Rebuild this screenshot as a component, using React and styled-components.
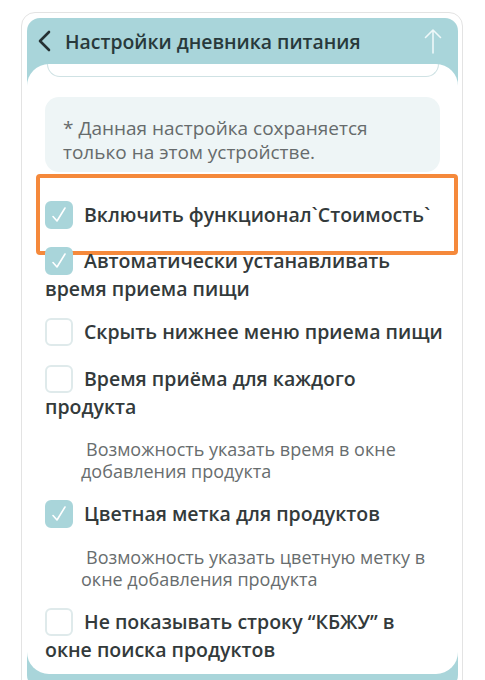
import React from 'react'
import styled, { createGlobalStyle } from 'styled-components'

const Global = createGlobalStyle`
  html, body {
    margin: 0;
    background: #ffffff;
    font-family: "Open Sans", "Noto Sans", sans-serif;
  }
`

const Page = styled.div`
  padding: 12px 22px 0 21px;
  height: 680px;
  overflow: hidden;
  box-sizing: border-box;
`

const Frame = styled.div`
  border: 1.5px solid #e3e3e3;
  border-radius: 14px;
  padding: 5px 4px 0 5px;
  height: 720px;
`

const Shell = styled.div`
  background: #a9d5da;
  border-radius: 13px;
  padding-bottom: 14px;
`

const Header = styled.div`
  height: 46px;
  display: flex;
  align-items: center;
  padding: 0 16px 0 10px;
  gap: 12px;
`

const Title = styled.div`
  flex: 1;
  font-size: 19.4px;
  font-weight: 600;
  color: #28393b;
`

const Panel = styled.div`
  background: #ffffff;
  border-radius: 22px;
  padding: 0 10px 11px 18px;
`

const PrevCard = styled.div`
  margin: 0 9px 0 2px;
  height: 12px;
  border: 1.5px solid #cfe2e4;
  border-top: none;
  border-radius: 0 0 14px 14px;
`

const Note = styled.div`
  margin: 20px 8px 0 0;
  background: #eef5f6;
  border-radius: 14px;
  padding: 19px 18px 8px;
  font-size: 19px;
  line-height: 24px;
  color: #666b6c;
`

const List = styled.div`
  margin-top: 29px;
  display: flex;
  flex-direction: column;
`

const Row = styled.div`
  position: relative;
  font-size: 19.5px;
  font-weight: 600;
  line-height: 27px;
  color: #333a3b;
  margin-top: ${p => p.$gap}px;
`

const Box = styled.span`
  display: inline-block;
  box-sizing: border-box;
  width: 28px;
  height: 28px;
  border-radius: 6px;
  margin-right: 11px;
  vertical-align: -7px;
  background: ${p => (p.$on ? '#a9d5da' : '#ffffff')};
  border: 2px solid ${p => (p.$on ? '#a9d5da' : '#dfeaeb')};
  position: relative;
`

const Highlight = styled.div`
  position: absolute;
  left: -9px;
  right: -10px;
  top: -27px;
  bottom: -26px;
  border: 4.5px solid #f5893b;
  border-radius: 4px;
  pointer-events: none;
`

const Sub = styled.div`
  margin: 18px 8px 0 36px;
  font-size: 18px;
  line-height: 22px;
  color: #686d6e;
  text-indent: 5px;
`

const Check = () => (
  <svg width='24' height='24' viewBox='0 0 24 24' style={{ position: 'absolute', left: 0, top: 0 }}>
    <path d='M6 13.5 L10 18 L18 5' fill='none' stroke='#ffffff' strokeWidth='1.6' strokeLinecap='round' strokeLinejoin='round' />
  </svg>
)

const CheckBox = ({ on }) => <Box $on={on}>{on && <Check />}</Box>

const Back = () => (
  <svg width='16' height='24' viewBox='0 0 16 24'>
    <path d='M12 3 L3 12 L12 21' fill='none' stroke='#253133' strokeWidth='2.6' strokeLinecap='round' strokeLinejoin='round' />
  </svg>
)

const Up = () => (
  <svg width='18' height='28' viewBox='0 0 18 28'>
    <path d='M9 26 V3 M1.5 10.5 L9 3 L16.5 10.5' fill='none' stroke='#eef8f9' strokeWidth='1.6' strokeLinecap='round' strokeLinejoin='round' />
  </svg>
)

export default function App() {
  return (
    <Page>
      <Global />
      <Frame>
        <Shell>
          <Header>
            <Back />
            <Title>Настройки дневника питания</Title>
            <Up />
          </Header>
          <Panel>
            <PrevCard />
            <Note>
              * Данная настройка сохраняется
              <br />
              только на этом устройстве.
            </Note>
            <List>
              <Row $gap={0}>
                <CheckBox on />
                Включить функционал`Стоимость`
                <Highlight />
              </Row>
              <Row $gap={18}>
                <CheckBox on />
                Автоматически устанавливать<br />время приема пищи
              </Row>
              <Row $gap={16}>
                <CheckBox />
                Скрыть нижнее меню приема пищи
              </Row>
              <Row $gap={19}>
                <CheckBox />
                Время приёма для каждого<br />продукта
              </Row>
              <Sub>Возможность указать время в окне добавления продукта</Sub>
              <Row $gap={18}>
                <CheckBox on />
                Цветная метка для продуктов
              </Row>
              <Sub>Возможность указать цветную метку в окне добавления продукта</Sub>
              <Row $gap={18}>
                <CheckBox />
                Не показывать строку “КБЖУ” в<br />окне поиска продуктов
              </Row>
            </List>
          </Panel>
        </Shell>
      </Frame>
    </Page>
  )
}
